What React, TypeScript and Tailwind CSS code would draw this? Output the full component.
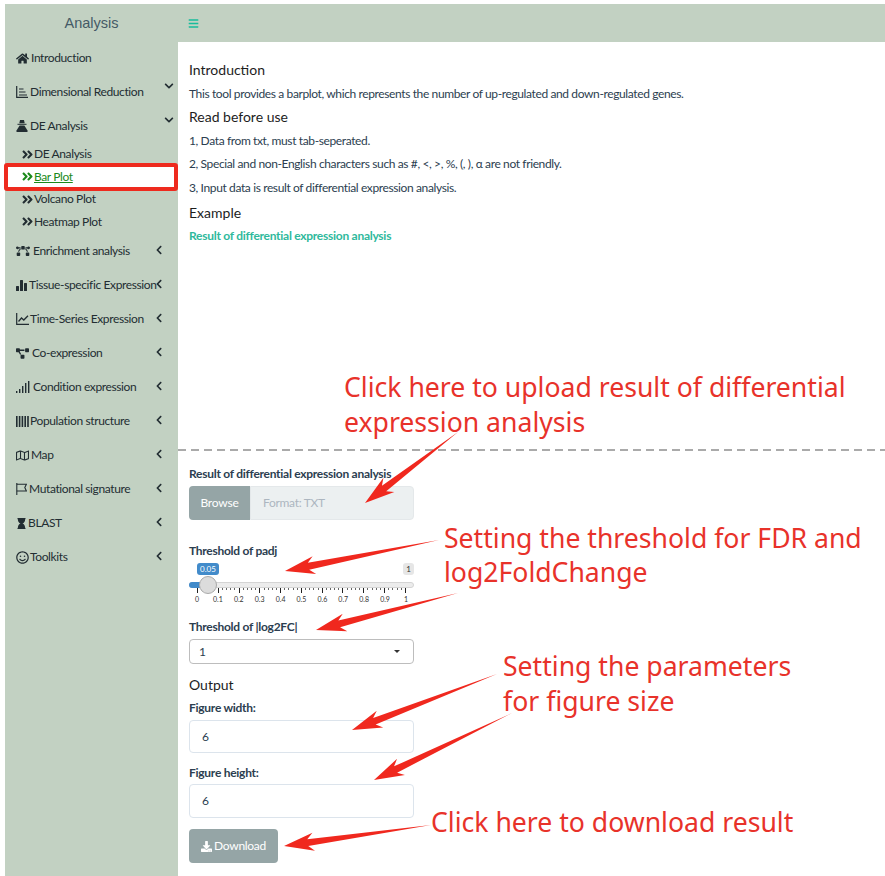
import { FaHome, FaBezierCurve, FaProjectDiagram, FaRegMap, FaHourglass, FaRegSmile, FaChevronDown, FaChevronLeft, FaAngleDoubleRight, FaDownload, FaBars } from "react-icons/fa";
import type { ReactNode } from "react";

function AxisBars() {
  return (
    <svg width="12" height="12" viewBox="0 0 12 12" fill="none" stroke="currentColor">
      <path d="M.7 0v11.3H12" strokeWidth="1.2" />
      <path d="M3 3h4.5M3 6h6.5M3 9h8" strokeWidth="1.1" />
    </svg>
  );
}

function DeIcon() {
  return (
    <svg width="12" height="12" viewBox="0 0 12 12" fill="currentColor">
      <path d="M4 0h4l.7 3.2H3.3z" />
      <path d="M1.5 3.8h9v1h-9z" />
      <path d="M3.6 5.4h4.8L11.5 10.6V12H.5V10.6z" />
    </svg>
  );
}

function SolidBars() {
  return (
    <svg width="11" height="12" viewBox="0 0 11 12" fill="currentColor">
      <rect x="0" y="7" width="3" height="5" rx=".5" />
      <rect x="4" y="1" width="3" height="11" rx=".5" />
      <rect x="8" y="4" width="3" height="8" rx=".5" />
    </svg>
  );
}

function TimeIcon() {
  return (
    <svg width="13" height="12" viewBox="0 0 13 12" fill="none" stroke="currentColor">
      <path d="M.7 0v11.3H13" strokeWidth="1.2" />
      <path d="M2.5 8.5 5.5 5l2.3 2L12 2.7" strokeWidth="1.3" />
    </svg>
  );
}

function ThinSignal() {
  return (
    <svg width="14" height="12" viewBox="0 0 14 12" fill="currentColor">
      <rect x="0" y="10" width="1.4" height="2" />
      <rect x="3" y="8" width="1.4" height="4" />
      <rect x="6" y="5" width="1.4" height="7" />
      <rect x="9" y="2" width="1.4" height="10" />
      <rect x="12" y="0" width="1.4" height="12" />
    </svg>
  );
}

function Barcode() {
  return (
    <svg width="13" height="11" viewBox="0 0 13 11" fill="currentColor">
      <rect x="0" y="0" width="1.6" height="11" />
      <rect x="2.8" y="0" width="1.6" height="11" />
      <rect x="5.6" y="0" width="1.6" height="11" />
      <rect x="8.4" y="0" width="1.6" height="11" />
      <rect x="11.2" y="0" width="1.6" height="11" />
    </svg>
  );
}

function FlagIcon() {
  return (
    <svg width="11" height="12" viewBox="0 0 11 12" fill="none" stroke="currentColor" strokeWidth="1.1">
      <path d="M.8 0v12" />
      <path d="M.8 1.2h9.6L8.8 4.6l1.6 3.4H.8" />
    </svg>
  );
}

function TopRow({ icon, label, open, none, gap = 2 }: { icon: ReactNode; label: string; open?: boolean; none?: boolean; gap?: number }) {
  return (
    <div className="relative flex h-[34px] items-center pl-[11px] text-[12px] tracking-[-0.38px] text-[#222d32]">
      <span className="flex shrink-0 items-center" style={{ marginRight: gap }}>{icon}</span>
      <span className="whitespace-nowrap">{label}</span>
      {!none && open && (
        <span className="absolute right-[4px] top-[6px] flex h-[10px] items-center text-[10px]">
          <FaChevronDown />
        </span>
      )}
      {!none && !open && (
        <span className="absolute right-[14px] top-[11px] flex h-[10px] items-center text-[10px]">
          <FaChevronLeft />
        </span>
      )}
    </div>
  );
}

function SubRow({ label, active }: { label: string; active?: boolean }) {
  return (
    <div className={`flex h-[22.5px] items-center pl-[16px] text-[12px] tracking-[-0.38px] ${active ? "bg-white text-[#1a8a1a]" : "text-[#222d32]"}`}>
      <FaAngleDoubleRight className="text-[13px]" />
      <span className={active ? "underline" : ""}>{label}</span>
    </div>
  );
}

function Arrow({ x1, y1, x2, y2 }: { x1: number; y1: number; x2: number; y2: number }) {
  const dx = x2 - x1;
  const dy = y2 - y1;
  const l = Math.hypot(dx, dy);
  const ux = dx / l;
  const uy = dy / l;
  const nx = -uy;
  const ny = ux;
  const p = (a: number, b: number) => `${x2 - ux * a + nx * b},${y2 - uy * a + ny * b}`;
  return <polygon fill="#f0281e" points={`${x1},${y1} ${p(24, 3.5)} ${p(30, 9)} ${x2},${y2} ${p(30, -9)} ${p(24, -3.5)}`} />;
}

function Note({ className, children }: { className: string; children: ReactNode }) {
  return <div className={`absolute whitespace-nowrap font-['Noto_Sans',sans-serif] text-[26.6px] leading-[36px] text-[#e8322a] ${className}`}>{children}</div>;
}

const ticks = ["0", "0.1", "0.2", "0.3", "0.4", "0.5", "0.6", "0.7", "0.8", "0.9", "1"];
const tickMarks = Array.from({ length: 51 }, (_, i) => i);
const bodyText = "text-[12px] leading-[14px] tracking-[-0.38px]";
const labelText = "block text-[12px] font-bold leading-[14px] tracking-[-0.27px]";

export default function App() {
  return (
    <div className="relative flex h-[876px] w-[885px] overflow-hidden bg-white pl-[5px] pt-[4px] font-['Lato','Liberation_Sans',sans-serif] text-[#2c3e50]">
      <aside className="h-[872px] w-[173px] shrink-0 bg-[#c2d1c2]">
        <div className="flex h-[37px] items-center justify-center pt-[2px] font-['Liberation_Sans',sans-serif] text-[14.5px] text-[#445a66]">Analysis</div>
        <TopRow none icon={<FaHome className="text-[13px]" />} label="Introduction" />
        <TopRow icon={<AxisBars />} open label="Dimensional Reduction" />
        <TopRow icon={<DeIcon />} open label="DE Analysis" />
        <SubRow label="DE Analysis" />
        <SubRow active label="Bar Plot" />
        <SubRow label="Volcano Plot" />
        <SubRow label="Heatmap Plot" />
        <div className="h-[1px]" />
        <TopRow gap={3} icon={<FaBezierCurve className="text-[14px]" />} label="Enrichment analysis" />
        <TopRow gap={2} icon={<SolidBars />} label="Tissue-specific Expression" />
        <TopRow gap={1} icon={<TimeIcon />} label="Time-Series Expression" />
        <TopRow gap={3} icon={<FaProjectDiagram className="text-[13px]" />} label="Co-expression" />
        <TopRow gap={3} icon={<ThinSignal />} label="Condition expression" />
        <TopRow gap={1} icon={<Barcode />} label="Population structure" />
        <TopRow gap={2} icon={<FaRegMap className="text-[13px]" />} label="Map" />
        <TopRow gap={2} icon={<FlagIcon />} label="Mutational signature" />
        <TopRow gap={1} icon={<FaHourglass className="text-[11px]" />} label="BLAST" />
        <TopRow gap={1} icon={<FaRegSmile className="text-[13px]" />} label="Toolkits" />
      </aside>

      <main className="flex min-w-0 flex-1 flex-col">
        <div className="flex h-[38px] items-center bg-[#c2d1c2] pl-[10px] text-[#18bc9c]">
          <FaBars className="text-[11px]" />
        </div>
        <div className="pl-[11px]">
          <h4 className="mt-[19px] text-[14px] leading-[17px] text-[#1d1d1d]">Introduction</h4>
          <p className={`mt-[9px] ${bodyText}`}>This tool provides a barplot, which represents the number of up-regulated and down-regulated genes.</p>
          <h4 className="mt-[7px] text-[14px] leading-[17px] text-[#1d1d1d]">Read before use</h4>
          <p className={`mt-[9px] ${bodyText}`}>1, Data from txt, must tab-seperated.</p>
          <p className={`mt-[9px] ${bodyText}`}>2, Special and non-English characters such as #, &lt;, &gt;, %, (, ), α are not friendly.</p>
          <p className={`mt-[10px] ${bodyText}`}>3, Input data is result of differential expression analysis.</p>
          <h4 className="mt-[9px] text-[14px] leading-[17px] text-[#1d1d1d]">Example</h4>
          <p className="mt-[8px] text-[12px] font-bold leading-[14px] tracking-[-0.27px] text-[#2fb99c]">Result of differential expression analysis</p>
        </div>
        <div className="mt-[206px] h-[2px] bg-[repeating-linear-gradient(90deg,#aaaaaa_0,#aaaaaa_8px,transparent_8px,transparent_13px)]" />
        <div className="w-[236px] pl-[11px]">
          <label className={`mt-[16px] ${labelText}`}>Result of differential expression analysis</label>
          <div className="mt-[5px] flex h-[34px] w-[225px]">
            <div className="flex w-[61px] items-center justify-center rounded-l-[4px] bg-[#95a5a6] text-[12px] tracking-[-0.2px] text-white">Browse</div>
            <div className="flex flex-1 items-center rounded-r-[4px] border border-[#e4e8ea] bg-[#ecf0f1] pl-[12px] text-[12px] tracking-[-0.3px] text-[#acb6c0]">Format: TXT</div>
          </div>

          <label className={`mt-[24px] ${labelText}`}>Threshold of padj</label>
          <div className="relative mt-[5px] h-[36px] w-[225px]">
            <span className="absolute left-[8px] top-0 rounded-[3px] bg-[#428bca] px-[3px] text-[8px] leading-[12px] text-white">0.05</span>
            <span className="absolute right-0 top-0 rounded-[3px] bg-[#e6e6e6] px-[3px] text-[8px] leading-[12px] text-[#333]">1</span>
            <div className="absolute left-0 top-[19px] h-[6px] w-full rounded-[3px] border border-[#d4d4d4] bg-[#ececec]" />
            <div className="absolute left-0 top-[19px] h-[6px] w-[12px] rounded-l-[3px] bg-[#428bca]" />
            <div className="absolute left-0 top-[25px] flex w-[225px] items-start justify-between px-[8px]">
              {tickMarks.map((t) => (
                <span key={t} className={t % 5 === 0 ? "h-[5px] w-px bg-[#222]" : "h-[2px] w-px bg-[#666]"} />
              ))}
            </div>
            <div className="absolute left-[10px] top-[13px] h-[18px] w-[18px] rounded-full border border-[#aaa] bg-[#dcdcdc]" />
            <div className="absolute left-[2px] top-[32px] flex w-[221px] justify-between text-[7px] leading-[9px]">
              {ticks.map((t) => (
                <span key={t} className="w-[12px] text-center text-[#333]">{t}</span>
              ))}
            </div>
          </div>

          <label className={`mt-[21px] ${labelText}`}>Threshold of |log2FC|</label>
          <div className="mt-[5px] flex h-[25px] w-[225px] items-center justify-between rounded-[4px] border border-[#bdbdbd] pl-[9px] pr-[13px] text-[12px]">
            <span>1</span>
            <span className="h-0 w-0 border-x-[3px] border-t-[3px] border-x-transparent border-t-[#333]" />
          </div>

          <h4 className="mt-[12px] text-[14px] leading-[17px] text-[#1d1d1d]">Output</h4>
          <label className={`mt-[8px] ${labelText}`}>Figure width:</label>
          <div className="mt-[5px] flex h-[33px] w-[225px] items-center rounded-[4px] border border-[#dce4ec] pl-[12px] text-[12px]">6</div>
          <label className={`mt-[13px] ${labelText}`}>Figure height:</label>
          <div className="mt-[4px] flex h-[34px] w-[225px] items-center rounded-[4px] border border-[#dce4ec] pl-[12px] text-[12px]">6</div>
          <div className="mt-[11px] flex h-[34px] w-[89px] items-center justify-center gap-[2px] rounded-[4px] bg-[#95a5a6] text-[12px] tracking-[-0.3px] text-white">
            <FaDownload className="text-[11px]" />
            <span>Download</span>
          </div>
        </div>
      </main>

      <div className="absolute left-[4px] top-[163px] h-[28px] w-[174px] rounded-[3px] border-[4px] border-[#ee2a1e]" />
      <Note className="left-[344px] top-[369px]">Click here to upload result of differential</Note>
      <Note className="left-[344px] top-[404px]">expression analysis</Note>
      <Note className="left-[444px] top-[520px]">Setting the threshold for FDR and</Note>
      <Note className="left-[444px] top-[554px]">log2FoldChange</Note>
      <Note className="left-[503px] top-[648px]">Setting the parameters</Note>
      <Note className="left-[503px] top-[683px]">for figure size</Note>
      <Note className="left-[431px] top-[804px]">Click here to download result</Note>
      <svg className="absolute left-0 top-0" width="885" height="876" viewBox="0 0 885 876">
        <Arrow x1={458} y1={432} x2={365} y2={503} />
        <Arrow x1={439} y1={540} x2={285} y2={571} />
        <Arrow x1={458} y1={593} x2={316} y2={630} />
        <Arrow x1={497} y1={674} x2={352} y2={730} />
        <Arrow x1={512} y1={713} x2={374} y2={780} />
        <Arrow x1={431} y1={825} x2={284} y2={846} />
      </svg>
    </div>
  );
}
